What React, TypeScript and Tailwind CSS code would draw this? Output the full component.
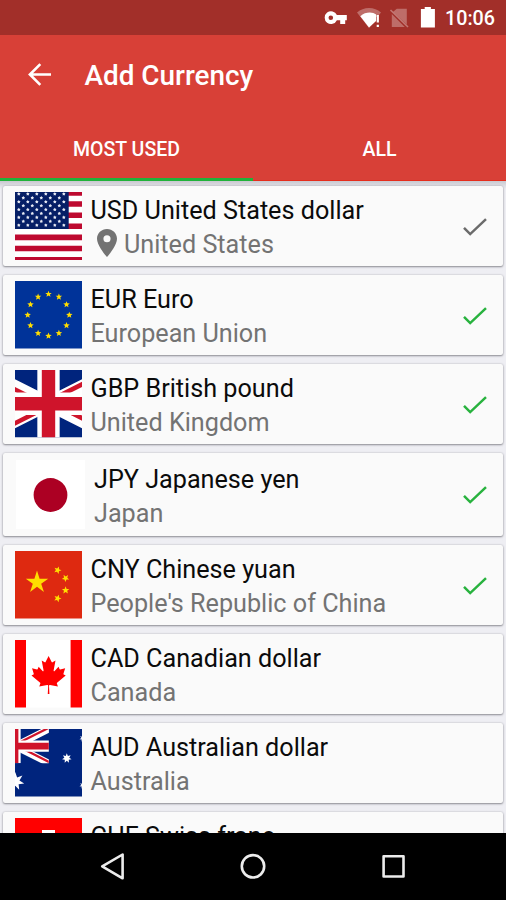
import React from "react";

function starPoints(cx: number, cy: number, outer: number, inner: number, tips = 5, turn = -90) {
  return Array.from({ length: tips * 2 }, (_, i) => {
    const r = i % 2 === 0 ? outer : inner;
    const a = ((turn + (i * 180) / tips) * Math.PI) / 180;
    return `${(cx + r * Math.cos(a)).toFixed(2)},${(cy + r * Math.sin(a)).toFixed(2)}`;
  }).join(" ");
}

function Flag({ children, box = "0 0 67 67" }: { children: React.ReactNode; box?: string }) {
  return (
    <svg className="h-[67.5px] w-[67px] shrink-0" viewBox={box} preserveAspectRatio="none">
      {children}
    </svg>
  );
}

function UnionJack({ id }: { id: string }) {
  return (
    <g>
      <clipPath id={id + "f"}>
        <path d="M0 0h60v30H0z" />
      </clipPath>
      <clipPath id={id + "d"}>
        <path d="M30 15h30v15zv15H0zH0V0zV0h30z" />
      </clipPath>
      <g clipPath={`url(#${id}f)`}>
        <path d="M0 0h60v30H0z" fill="#00247d" />
        <path d="M0 0l60 30m0-30L0 30" stroke="#fff" strokeWidth="6" />
        <path d="M0 0l60 30m0-30L0 30" clipPath={`url(#${id}d)`} stroke="#cf142b" strokeWidth="4" />
        <path d="M30 0v30M0 15h60" stroke="#fff" strokeWidth="10" />
        <path d="M30 0v30M0 15h60" stroke="#cf142b" strokeWidth="6" />
      </g>
    </g>
  );
}

function UsaFlag() {
  return (
    <Flag>
      <path d="M0 0h67v67H0z" fill="#fff" />
      {[-1.9, 9.2, 20.3, 31.3, 42.3, 53.4, 64.4].map((y) => (
        <path key={y} d={`M0 ${y}h67v5.5H0z`} fill="#be0a30" />
      ))}
      <path d="M0 0h53.7v36.7H0z" fill="#061f66" />
      {Array.from({ length: 9 }, (_, r) =>
        Array.from({ length: 6 }, (_, c) => {
          const x = 3.8 + c * 9 + (r % 2 ? 4.5 : 0);
          return x < 52 ? (
            <polygon key={`${r}-${c}`} points={starPoints(x, 2 + r * 3.87, 1.8, 1.1)} fill="#e8ebf4" />
          ) : null;
        })
      )}
    </Flag>
  );
}

function EuFlag() {
  return (
    <Flag>
      <path d="M0 0h67v67H0z" fill="#039" />
      {Array.from({ length: 12 }, (_, i) => {
        const a = (i * Math.PI) / 6;
        return (
          <polygon
            key={i}
            points={starPoints(33.5 + 20.8 * Math.sin(a), 33.8 - 20.8 * Math.cos(a), 3.4, 1.5)}
            fill="#fd0"
          />
        );
      })}
    </Flag>
  );
}

function UkFlag() {
  return (
    <Flag box="15 0 30 30">
      <UnionJack id="uk" />
    </Flag>
  );
}

function JapanFlag() {
  return (
    <svg className="h-[69px] w-[69px] shrink-0" viewBox="0 0 69 69">
      <path d="M0 0h69v69H0z" fill="#fff" />
      <circle cx="34.5" cy="35" r="16.9" fill="#ac0023" />
    </svg>
  );
}

function ChinaFlag() {
  return (
    <Flag>
      <path d="M0 0h67v67H0z" fill="#de2910" />
      <polygon points={starPoints(22, 31.2, 11.8, 4.4)} fill="#ffde00" />
      <polygon points={starPoints(42.6, 19, 3.9, 1.7, 5, -70)} fill="#ffde00" />
      <polygon points={starPoints(50.6, 26.9, 3.9, 1.7, 5, -50)} fill="#ffde00" />
      <polygon points={starPoints(50.6, 39, 3.9, 1.7, 5, -90)} fill="#ffde00" />
      <polygon points={starPoints(42.6, 47, 3.9, 1.7, 5, -70)} fill="#ffde00" />
    </Flag>
  );
}

function CanadaFlag() {
  return (
    <Flag>
      <path d="M0 0h67v67H0z" fill="#fff" />
      <path d="M0 0h11v67H0zM55.6 0H67v67H55.6z" fill="#f00" />
      <path
        transform="translate(33.6 34.6) scale(.0092 .0094)"
        fill="#f00"
        d="m-90 2030 45-863a95 95 0 0 0-111-98l-859 151 116-320a65 65 0 0 0-20-73l-941-762 212-99a65 65 0 0 0 34-79l-186-572 542 115a65 65 0 0 0 73-38l105-247 423 454a65 65 0 0 0 111-57l-204-1052 327 189a65 65 0 0 0 91-27l332-652 332 652a65 65 0 0 0 91 27l327-189-204 1052a65 65 0 0 0 111 57l423-454 105 247a65 65 0 0 0 73 38l542-115-186 572a65 65 0 0 0 34 79l212 99-941 762a65 65 0 0 0-20 73l116 320-859-151a95 95 0 0 0-111 98l45 863z"
      />
    </Flag>
  );
}

function AustraliaFlag() {
  return (
    <Flag>
      <path d="M0 0h67v67H0z" fill="#00247d" />
      <g transform="translate(-33.9 0) scale(1.13)">
        <UnionJack id="au" />
      </g>
      <g fill="#fff">
        <polygon points={starPoints(0.2, 52, 9.2, 4.4, 7)} />
        <polygon points={starPoints(51.8, 29, 4.9, 2.5, 7)} />
        <polygon points={starPoints(68, 9.3, 3.6, 1.6, 7)} />
        <polygon points={starPoints(68, 56, 3.6, 1.6, 7)} />
      </g>
    </Flag>
  );
}

function SwissFlag() {
  return (
    <Flag>
      <path d="M0 0h67v67H0z" fill="#f00" />
      <path d="M27 12h13v15h15v13H40v15H27V40H12V27h15z" fill="#fff" />
    </Flag>
  );
}

type Currency = {
  name: string;
  place: string;
  flag: React.ReactNode;
  check?: string;
  pin?: boolean;
  tall?: boolean;
};

const currencies: Currency[] = [
  { name: "USD United States dollar", place: "United States", flag: <UsaFlag />, check: "#6b6b6b", pin: true },
  { name: "EUR Euro", place: "European Union", flag: <EuFlag />, check: "#28b23e" },
  { name: "GBP British pound", place: "United Kingdom", flag: <UkFlag />, check: "#28b23e" },
  { name: "JPY Japanese yen", place: "Japan", flag: <JapanFlag />, check: "#28b23e", tall: true },
  { name: "CNY Chinese yuan", place: "People's Republic of China", flag: <ChinaFlag />, check: "#28b23e" },
  { name: "CAD Canadian dollar", place: "Canada", flag: <CanadaFlag /> },
  { name: "AUD Australian dollar", place: "Australia", flag: <AustraliaFlag /> },
  { name: "CHF Swiss franc", place: "Switzerland", flag: <SwissFlag /> },
];

function CurrencyCard({ name, place, flag, check, pin, tall }: Currency) {
  return (
    <li
      className={`flex shrink-0 items-center rounded-[2px] bg-[#fafafa] pr-4 shadow-[0_1px_2px_rgba(60,60,70,0.5),0_0_2px_rgba(60,60,70,0.25)] ${
        tall ? "h-[83px] pl-[12.5px]" : "h-[80px] pl-[11.5px]"
      }`}
    >
      {flag}
      <div
        className={`min-w-0 flex-1 whitespace-nowrap text-[25.2px] leading-[34px] ${
          tall ? "pt-[5px] pl-[9.5px]" : "pt-[3px] pl-[9px]"
        }`}
      >
        <div className="text-[#0b0b0b]">{name}</div>
        <div className="flex items-center text-[#737373]">
          {pin && (
            <svg className="mt-[-3px] mr-[7px] ml-[6.5px] h-7 w-5 shrink-0" viewBox="5 2 14 20" preserveAspectRatio="none">
              <path
                fill="#737373"
                d="M12 2C8.13 2 5 5.13 5 9c0 5.25 7 13 7 13s7-7.75 7-13c0-3.87-3.13-7-7-7zm0 9.5a2.5 2.5 0 1 1 0-5 2.5 2.5 0 0 1 0 5z"
              />
            </svg>
          )}
          {place}
        </div>
      </div>
      {check && (
        <svg className="mt-px h-[18px] w-6 shrink-0" viewBox="0 0 24 18" fill="none">
          <path d="M1 9.8l6.2 6.3L23 1.2" stroke={check} strokeWidth="2.5" />
        </svg>
      )}
    </li>
  );
}

function StatusBar() {
  return (
    <div className="flex h-[35px] shrink-0 items-center bg-[#a22f29] text-white">
      <svg className="ml-[316px] h-[35px] w-[129px] shrink-0" viewBox="316 0 129 35">
        <path
          fill="#fff"
          fillRule="evenodd"
          d="M336.9 15a6.4 6.4 0 1 0 0 5.3h3.3v3.6h5v-3.6h1.6V15zM330.8 15.4a2.3 2.3 0 1 1 0 4.6 2.3 2.3 0 0 1 0-4.6z"
        />
        <path d="M357 12.5a18 18 0 0 1 24 0l-3.6 4.5H376v3L369 28z" fill="#fff" fillOpacity=".3" />
        <path d="M360.3 16.2c5-4.5 12.4-4.5 15.8-1.6V21L369 27.5z" fill="#fff" />
        <path d="M376.7 15h2.2v7.5h-2.2zM376.7 24.7h2.2V27h-2.2z" fill="#fff" />
        <path d="M396.8 8.7h10v15.8L393.2 11.8zM391.8 14l13 13h-13z" fill="#fff" fillOpacity=".3" />
        <path d="M390.5 10l17.5 17" stroke="#fff" strokeOpacity=".35" strokeWidth="1.6" />
        <path d="M424.7 7h6.2v2h4v18.5h-14V9h3.8z" fill="#fff" />
      </svg>
      <span className="pt-[3px] text-[19.7px] leading-none font-medium">10:06</span>
    </div>
  );
}

export default function App() {
  return (
    <div className="flex h-[900px] w-[506px] flex-col overflow-hidden bg-[#eeeef3] font-['Roboto',sans-serif]">
      <StatusBar />
      <header className="flex h-[146px] shrink-0 flex-col bg-[#d84037] text-white">
        <div className="flex h-[80px] items-center pl-[28px]">
          <svg className="mt-[-2px] h-[23px] w-[23px]" viewBox="0 0 23 23" fill="none">
            <path d="M12.3 1.2L1.9 11.5l10.4 10.3M2.2 11.5H23" stroke="#fff" strokeWidth="2.6" />
          </svg>
          <h1 className="pt-[2px] pl-[33.5px] text-[27.9px] leading-none font-medium">Add Currency</h1>
        </div>
        <nav className="grid flex-1 grid-cols-2 text-center text-[19.5px] font-medium">
          <div className="flex items-center justify-center border-b-[3px] border-[#20b23a] pt-[7px]">MOST USED</div>
          <div className="flex items-center justify-center border-b border-[#e52d1c] pt-[5px]">ALL</div>
        </nav>
      </header>
      <ul className="flex min-h-0 flex-1 flex-col gap-[9px] overflow-hidden bg-linear-to-b from-[#c9c9d0] to-[#eeeef3] to-[8px] px-[3px] pt-[5px]">
        {currencies.map((c) => (
          <CurrencyCard key={c.name} {...c} />
        ))}
      </ul>
      <footer className="flex h-[67px] shrink-0 items-center bg-black">
        <svg className="h-[67px] w-full" viewBox="0 833 506 67" fill="none" stroke="#ececec" strokeWidth="2.6" strokeLinejoin="round">
          <path d="M102.2 866.4L122.6 854.5v23.8z" />
          <circle cx="253" cy="866.3" r="11.2" />
          <rect x="383.6" y="856.3" width="19.9" height="20.2" />
        </svg>
      </footer>
    </div>
  );
}
